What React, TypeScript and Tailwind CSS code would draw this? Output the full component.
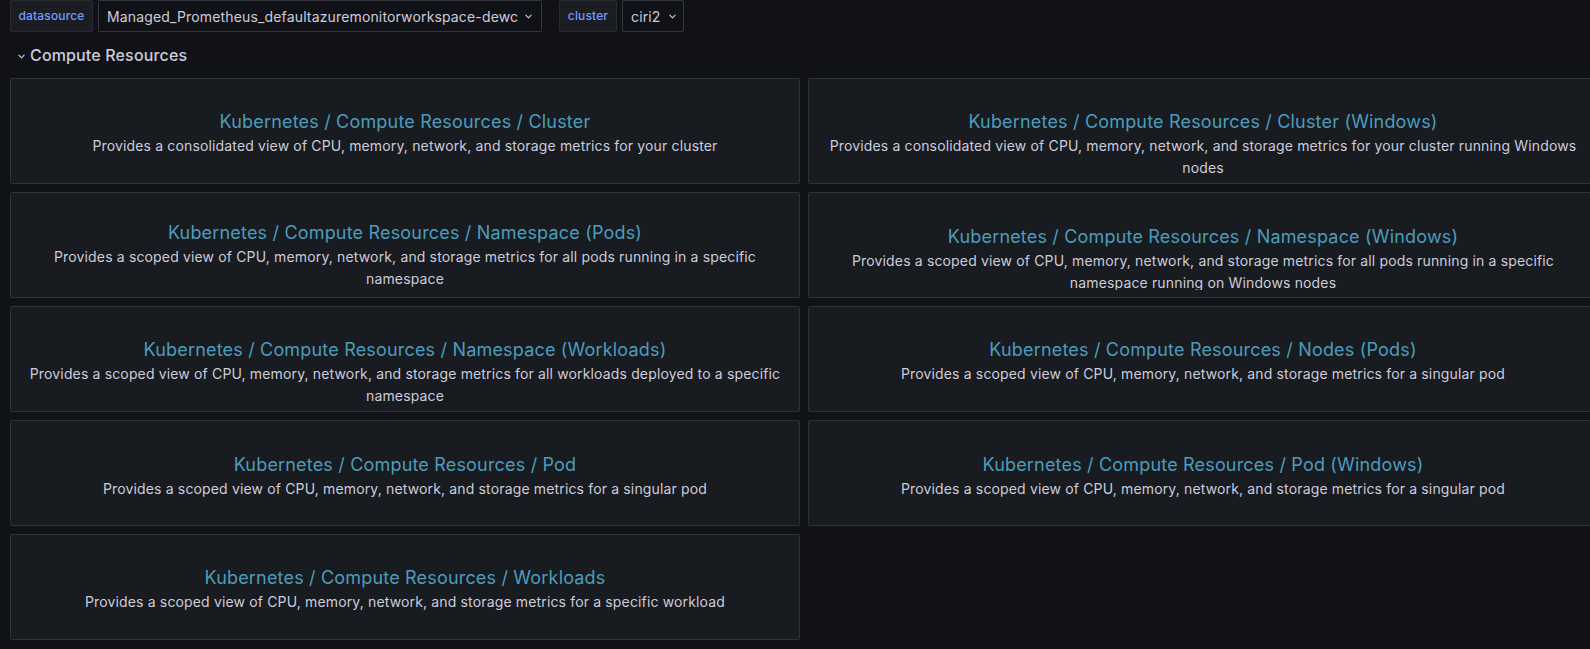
import React from "react"

type Dash = { title: string; lines: string[]; pt: string }

const dashboards: Dash[] = [
  { title: "Kubernetes / Compute Resources / Cluster", lines: ["Provides a consolidated view of CPU, memory, network, and storage metrics for your cluster"], pt: "pt-[29px]" },
  { title: "Kubernetes / Compute Resources / Cluster (Windows)", lines: ["Provides a consolidated view of CPU, memory, network, and storage metrics for your cluster running Windows", "nodes"], pt: "pt-[29px]" },
  { title: "Kubernetes / Compute Resources / Namespace (Pods)", lines: ["Provides a scoped view of CPU, memory, network, and storage metrics for all pods running in a specific", "namespace"], pt: "pt-[26px]" },
  { title: "Kubernetes / Compute Resources / Namespace (Windows)", lines: ["Provides a scoped view of CPU, memory, network, and storage metrics for all pods running in a specific", "namespace running on Windows nodes"], pt: "pt-[30px]" },
  { title: "Kubernetes / Compute Resources / Namespace (Workloads)", lines: ["Provides a scoped view of CPU, memory, network, and storage metrics for all workloads deployed to a specific", "namespace"], pt: "pt-[29px]" },
  { title: "Kubernetes / Compute Resources / Nodes (Pods)", lines: ["Provides a scoped view of CPU, memory, network, and storage metrics for a singular pod"], pt: "pt-[29px]" },
  { title: "Kubernetes / Compute Resources / Pod", lines: ["Provides a scoped view of CPU, memory, network, and storage metrics for a singular pod"], pt: "pt-[30px]" },
  { title: "Kubernetes / Compute Resources / Pod (Windows)", lines: ["Provides a scoped view of CPU, memory, network, and storage metrics for a singular pod"], pt: "pt-[30px]" },
  { title: "Kubernetes / Compute Resources / Workloads", lines: ["Provides a scoped view of CPU, memory, network, and storage metrics for a specific workload"], pt: "pt-[29px]" },
]

const Chevron = ({ className }: { className?: string }) => (
  <svg viewBox="0 0 8 5" className={className} fill="none" stroke="currentColor" strokeWidth="1.3" strokeLinecap="round" strokeLinejoin="round">
    <path d="M1 1l3 3 3-3" />
  </svg>
)

const DashCard = ({ d }: { d: Dash }) => (
  <div className="h-[106px] bg-[#181b1f] border border-[#2f3238] rounded-[2px] overflow-hidden">
    <div className="h-[97px] overflow-hidden px-4">
      <div className={`${d.pt} text-center`}>
        <div className="text-[18px] leading-[27px] text-[#4c9dbd] whitespace-nowrap tracking-[0.18px]">{d.title}</div>
        {d.lines.map((l) => (
          <div key={l} className="text-[14px] leading-[22px] text-[#ccccdc] whitespace-nowrap tracking-[0.15px]">{l}</div>
        ))}
      </div>
    </div>
  </div>
)

export default function App() {
  return (
    <div className="w-[1590px] h-[649px] overflow-hidden bg-[#111217] font-['Inter',sans-serif] tracking-[0.15px]">
      {/* variables */}
      <div className="flex items-center h-8 pl-[10px]">
        <div className="flex gap-[5px]">
          <div className="h-8 w-[83px] flex items-center justify-center bg-[#1b1d22] border border-[#2a2c31] rounded-[2px] text-[12px] font-medium text-[#6e9fff]">datasource</div>
          <div className="h-8 w-[444px] flex items-center pl-[8px] pr-[6px] border border-[#34373d] rounded-[2px] text-[14px] text-[#ccccdc]">
            <span className="whitespace-nowrap">Managed_Prometheus_defaultazuremonitorworkspace-dewc</span>
            <Chevron className="w-[7px] h-[5px] ml-[7px] shrink-0 text-[#ccccdc]" />
          </div>
        </div>
        <div className="flex gap-[5px] ml-[17px]">
          <div className="h-8 w-[58px] flex items-center justify-center bg-[#1b1d22] border border-[#2a2c31] rounded-[2px] text-[12px] font-medium text-[#6e9fff]">cluster</div>
          <div className="h-8 w-[62px] flex items-center pl-[8px] border border-[#34373d] rounded-[2px] text-[14px] text-[#ccccdc]">
            <span>ciri2</span>
            <Chevron className="w-[7px] h-[5px] ml-[8px] shrink-0 text-[#ccccdc]" />
          </div>
        </div>
      </div>

      {/* row header */}
      <div className="h-[46px] flex items-center pl-[18px] text-[#ccccdc]">
        <Chevron className="w-[7px] h-[5px] mr-[5px] mt-[2px] shrink-0" />
        <span className="text-[16px] font-medium">Compute Resources</span>
      </div>

      {/* panels */}
      <div className="grid grid-cols-[790px_790px] gap-[8px] pl-[10px]">
        {dashboards.map((d) => (
          <DashCard key={d.title} d={d} />
        ))}
      </div>
    </div>
  )
}
